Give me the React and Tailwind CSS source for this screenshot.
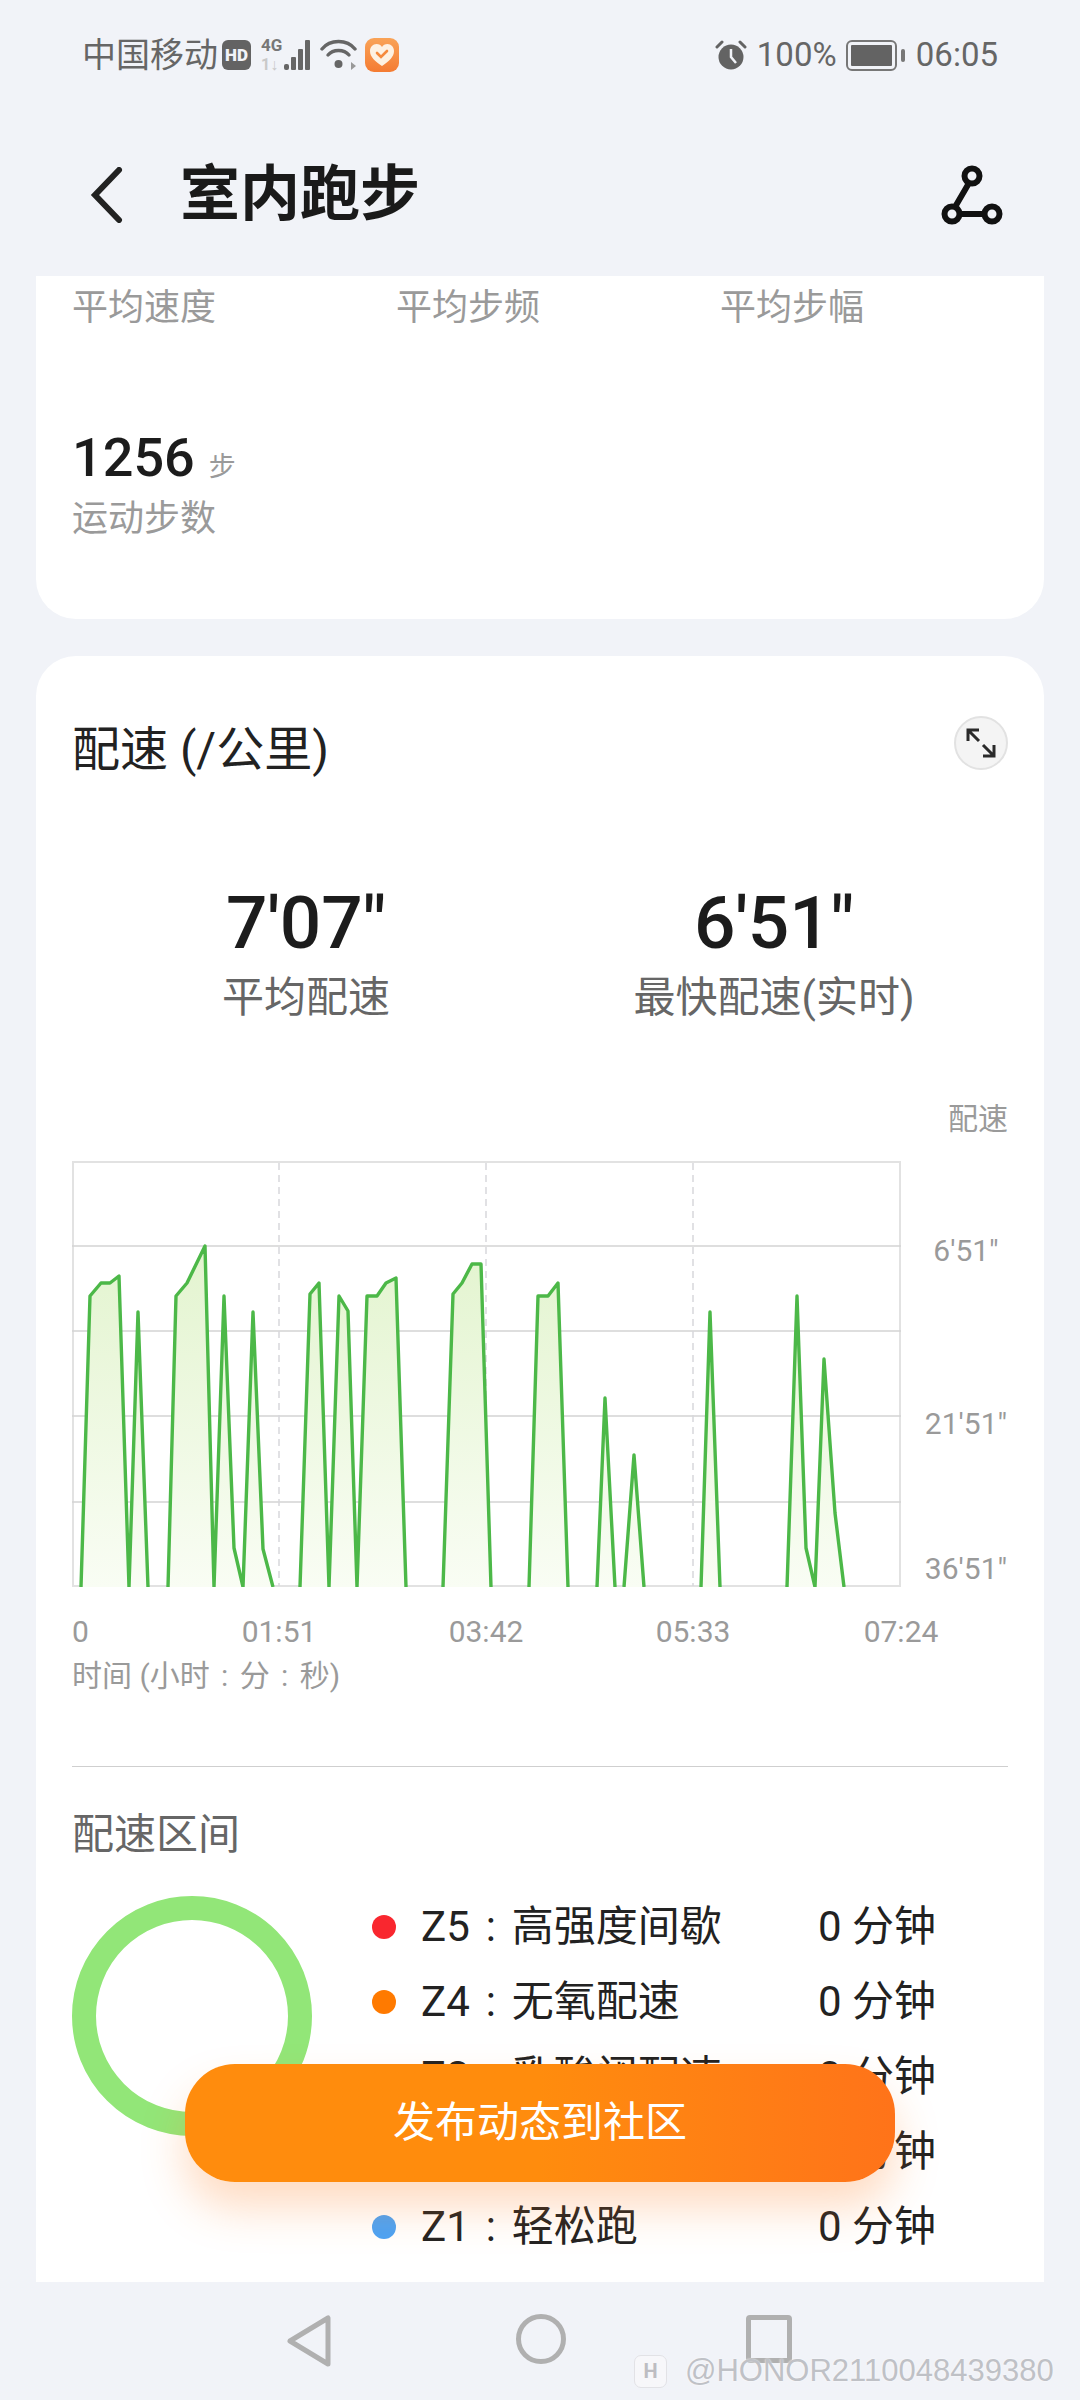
import React from 'react';

const FONT = 'font-[Roboto,"Noto_Sans_CJK_SC",sans-serif]';

// chart runs, px inside the plot; the line breaks where there is no pace
const PACE_RUNS = [
    [[9, 426], [18, 135], [29, 122], [38, 122], [47, 115], [57, 426], [66, 151], [76, 426]],
    [[96, 426], [104, 135], [115, 122], [133, 85], [142, 426], [152, 135], [162, 387], [171, 426],
        [181, 151], [191, 388], [201, 426]],
    [[228, 426], [238, 133], [247, 122], [257, 426], [267, 135], [276, 150], [285, 426],
        [295, 135], [305, 135], [314, 122], [324, 117], [334, 426]],
    [[371, 426], [381, 133], [390, 122], [400, 103], [409, 103], [419, 426]],
    [[457, 426], [466, 135], [476, 135], [486, 122], [496, 426]],
    [[525, 426], [533, 237], [543, 426]],
    [[552, 426], [562, 294], [572, 426]],
    [[629, 426], [638, 151], [648, 426]],
    [[715, 426], [725, 135], [734, 387], [743, 426], [752, 198], [763, 352], [772, 426]],
];

const ZONES = [
    { dot: 'bg-[#f9272f]', zone: 'Z5', name: '高强度间歇' },
    { dot: 'bg-[#ff7a00]', zone: 'Z4', name: '无氧配速' },
    { dot: 'bg-[#fcc419]', zone: 'Z3', name: '乳酸阈配速' },
    { dot: 'bg-[#5fd068]', zone: 'Z2', name: '马拉松配速' },
    { dot: 'bg-[#4ca3f5]', zone: 'Z1', name: '轻松跑' },
];

// small centred colon in a full width cell
const Colon = () => <span className="inline-block w-[1em] text-center">:</span>;

const StatLabel = ({ children, className }) => (
    <span className={`text-[36px] leading-[46px] text-[#9a9a9a] ${className || ''}`}>{children}</span>
);

const StatusLeft = () => (
    <div className="flex items-center">
        <span className="text-[34px] leading-[48px] text-[#666] w-[140px] whitespace-nowrap">中国移动</span>
        <div className="w-[29px] h-[30px] rounded-[6px] bg-[#636363] flex items-center justify-center text-[17px] leading-none font-black text-[#f1f3f8]">
            HD
        </div>
        <svg className="ml-[10px]" width="50" height="36" viewBox="0 0 50 36">
            <text x="0" y="14" fontSize="17" fontWeight="700" fill="#777" fontFamily="Roboto">4G</text>
            <text x="0" y="33" fontSize="16" fontWeight="700" fill="#c9c9c9" fontFamily="Roboto">1↓</text>
            <rect x="23" y="27" width="5" height="6" rx="2" fill="#666" />
            <rect x="30" y="20" width="5" height="13" rx="1" fill="#666" />
            <rect x="37" y="12" width="5" height="21" rx="1" fill="#666" />
            <rect x="44" y="3" width="5" height="30" rx="1" fill="#666" />
        </svg>
        <svg className="ml-[9px]" width="39" height="34" viewBox="0 0 39 34">
            <g fill="none" stroke="#666" strokeWidth="3.4" strokeLinecap="round">
                <path d="M2 11C10 1 27 1 35 11" />
                <path d="M8 17C13 11 24 11 29 17" />
            </g>
            <circle cx="18.5" cy="26" r="4" fill="#666" />
            <path d="M31 24v8l5-4z" fill="#999" />
        </svg>
        <div className="ml-[6px] w-[34px] h-[34px] rounded-[9px] bg-gradient-to-b from-[#f9a357] to-[#f47b32] flex items-center justify-center">
            <svg width="26" height="24" viewBox="0 0 26 24">
                <path d="M13 23C6 18 1 14 1 8c0-4 3-7 6.500-7 2.500 0 4.500 1.200 5.500 3 1-1.800 3-3 5.500-3C22 1 25 4 25 8c0 6-5 10-12 15z" fill="#fdf1e2" />
                <path d="M8 10l4 4 6-6" fill="none" stroke="#f58a3c" strokeWidth="2.600" strokeLinecap="round" />
            </svg>
        </div>
    </div>
);

const StatusRight = () => (
    <div className="flex items-center text-[33px] leading-[48px] text-[#666]">
        <svg width="32" height="30" viewBox="0 0 32 30">
            <circle cx="16" cy="17" r="12.500" fill="#636363" />
            <path d="M16 9v8l5 6" fill="none" stroke="#f1f3f8" strokeWidth="2.500" />
            <path d="M2 7l5-5M30 7l-5-5" stroke="#636363" strokeWidth="3" strokeLinecap="round" />
        </svg>
        <span className="ml-[10px] w-[84px]">100%</span>
        <div className="ml-[5px] w-[51px] h-[31px] rounded-[6px] border-2 border-[#777] p-[3px]">
            <div className="w-full h-full bg-[#636363] rounded-[1px]" />
        </div>
        <div className="ml-[4px] w-[4px] h-[13px] rounded-[2px] bg-[#777]" />
        <span className="ml-[11px]">06:05</span>
    </div>
);

const PaceChart = () => (
    <svg width="829" height="426" viewBox="0 0 829 426" className="block shrink-0">
        <defs>
            <linearGradient id="paceFill" gradientUnits="userSpaceOnUse" x1="0" y1="85" x2="0" y2="426">
                <stop offset="0" stopColor="#e3f4cf" />
                <stop offset="1" stopColor="#f9fdf4" />
            </linearGradient>
        </defs>
        <rect x="1" y="1" width="827" height="424" fill="#fff" stroke="#e2e2e2" strokeWidth="2" />
        {[85, 170, 255, 341].map((y) => (
            <line key={y} x1="0" x2="829" y1={y} y2={y} stroke="#d3d3d3" strokeWidth="1.500" />
        ))}
        {[207, 414, 621].map((x) => (
            <line key={x} x1={x} x2={x} y1="2" y2="425" stroke="#d8d8dc" strokeWidth="1.500" strokeDasharray="7 5" />
        ))}
        {PACE_RUNS.map((run) => {
            const points = run.map((p) => p.join(',')).join(' ');
            return (
                <g key={points}>
                    <polygon points={points} fill="url(#paceFill)" />
                    <polyline points={points} fill="none" stroke="#4cb848" strokeWidth="3.400" strokeLinejoin="round" />
                </g>
            );
        })}
    </svg>
);

const App = () => {
    return (
        <div className={`relative w-[1080px] h-[2400px] overflow-hidden flex flex-col bg-[#f1f3f8] ${FONT}`}>
            <div className="h-[108px] pl-[82px] pr-[82px] pt-[31px] flex items-start justify-between shrink-0">
                <StatusLeft />
                <StatusRight />
            </div>

            <div className="h-[168px] pl-[88px] pr-[76px] pt-[6px] flex items-center shrink-0">
                <svg width="38" height="56" viewBox="0 0 38 56" fill="none">
                    <path d="M31 3L7 28l24 25" stroke="#222" strokeWidth="6" strokeLinecap="round" />
                </svg>
                <h1 className="ml-[54px] text-[60px] leading-[70px] font-bold text-[#1a1a1a]">室内跑步</h1>
                <svg className="ml-auto" width="64" height="60" viewBox="0 0 64 60" fill="none" stroke="#111" strokeWidth="6">
                    <circle cx="32" cy="11" r="7.500" />
                    <circle cx="12" cy="49" r="7.500" />
                    <circle cx="52" cy="49" r="7.500" />
                    <path d="M29 18L15 42M20 49h24" />
                </svg>
            </div>

            <main className="h-[2006px] px-[36px] flex flex-col overflow-hidden shrink-0">
                <section className="h-[343px] shrink-0 bg-white rounded-b-[40px] px-[36px] pt-[9px]">
                    <div className="flex">
                        <StatLabel className="w-[324px]">平均速度</StatLabel>
                        <StatLabel className="w-[324px]">平均步频</StatLabel>
                        <StatLabel>平均步幅</StatLabel>
                    </div>
                    <div className="mt-[95px] flex items-baseline">
                        <span className="text-[54px] leading-[64px] font-medium text-[#1c1c1c]">1256</span>
                        <span className="ml-[14px] text-[27px] text-[#9a9a9a]">步</span>
                    </div>
                    <div className="mt-[6px]">
                        <StatLabel>运动步数</StatLabel>
                    </div>
                </section>

                <section className="relative mt-[37px] flex-1 bg-white rounded-t-[40px] px-[36px] pt-[62px]">
                    <div className="flex items-center justify-between h-[64px]">
                        <h2 className="text-[48px] leading-[64px] text-[#222]">配速 (/公里)</h2>
                        <div className="w-[54px] h-[54px] -mt-[14px] rounded-full border-2 border-[#e2e2e2] bg-[#f4f4f4] flex items-center justify-center">
                            <svg width="34" height="34" viewBox="0 0 34 34" fill="none" stroke="#2a2a2a" strokeWidth="3">
                                <path d="M4 4l11 11M19 19l11 11M4 15V4h11M30 19v11H19" />
                            </svg>
                        </div>
                    </div>

                    <div className="mt-[98px] flex">
                        <div className="w-[468px] flex flex-col items-center">
                            <span className="text-[73px] leading-[86px] font-medium text-[#1c1c1c]">7'07"</span>
                            <span className="mt-[5px] text-[42px] leading-[54px] text-[#666]">平均配速</span>
                        </div>
                        <div className="w-[468px] flex flex-col items-center">
                            <span className="text-[73px] leading-[86px] font-medium text-[#1c1c1c]">6'51"</span>
                            <span className="mt-[5px] text-[42px] leading-[54px] text-[#666]">最快配速(实时)</span>
                        </div>
                    </div>

                    <div className="mt-[74px] text-right text-[30px] leading-[40px] text-[#9a9a9a]">配速</div>

                    <div className="mt-[22px] flex">
                        <PaceChart />
                        <div className="ml-[23px] w-[84px] flex flex-col items-center text-[30px] leading-[36px] text-[#9a9a9a]">
                            <span className="mt-[72px]">6'51"</span>
                            <span className="mt-[137px]">21'51"</span>
                            <span className="mt-[109px]">36'51"</span>
                        </div>
                    </div>

                    <div className="mt-[27px] w-[934px] h-[36px] relative text-[30px] leading-[36px] text-[#9a9a9a]">
                        <span className="absolute left-0">0</span>
                        <span className="absolute left-[207px] -translate-x-1/2">01:51</span>
                        <span className="absolute left-[414px] -translate-x-1/2">03:42</span>
                        <span className="absolute left-[621px] -translate-x-1/2">05:33</span>
                        <span className="absolute left-[829px] -translate-x-1/2">07:24</span>
                    </div>
                    <div className="mt-[8px] text-[30px] leading-[36px] text-[#9a9a9a]">
                        时间 (小时<Colon />分<Colon />秒)
                    </div>

                    <div className="mt-[72px] h-px bg-[#cfcfcf]" />

                    <h3 className="mt-[41px] text-[42px] leading-[54px] text-[#666]">配速区间</h3>

                    <div className="mt-[24px] flex">
                        <div className="w-[240px] h-[240px] mt-[10px] rounded-full border-[24px] border-[#92e678] shrink-0" />
                        <div className="ml-[60px] mt-[3px] w-[574px] flex flex-col">
                            {ZONES.map((z) => (
                                <div key={z.zone} className="h-[75px] flex items-center text-[42px] text-[#222]">
                                    <span className={`w-[24px] h-[24px] rounded-full ${z.dot}`} />
                                    <span className="ml-[25px] w-[397px] whitespace-nowrap">
                                        {z.zone}<Colon />{z.name}
                                    </span>
                                    <span className="whitespace-nowrap">0 分钟</span>
                                </div>
                            ))}
                        </div>
                    </div>
                </section>
            </main>

            <nav className="flex-1 flex items-start pt-[32px] pl-[286px]">
                <svg width="47" height="54" viewBox="0 0 47 54" fill="none" stroke="#b0b0b0" strokeWidth="5" strokeLinejoin="round">
                    <path d="M42 4v46L4 27z" />
                </svg>
                <div className="ml-[183px] w-[50px] h-[50px] rounded-full border-[5px] border-[#b0b0b0]" />
                <div className="ml-[180px] mt-[1px] w-[46px] h-[48px] rounded-[4px] border-[5px] border-[#b0b0b0]" />
            </nav>

            <button className="absolute left-[185px] top-[2064px] w-[710px] h-[118px] rounded-[50px] bg-gradient-to-r from-[#ff8c0d] from-50% to-[#ff7319] shadow-[0_26px_44px_rgba(255,130,40,0.28)] text-[42px] leading-[54px] text-white">
                发布动态到社区
            </button>

            <div className="absolute left-[634px] top-[2353px] flex items-center">
                <div className="w-[33px] h-[33px] rounded-[7px] bg-[#f7f7fa] border border-[#e2e2e6] flex items-center justify-center text-[20px] font-bold text-[#bdbdc2]">
                    H
                </div>
                <span className="ml-[18px] font-['Liberation_Sans',sans-serif] text-[31px] leading-[36px] text-[#bfc1c6] whitespace-nowrap [text-shadow:0_0_2px_#fff]">
                    @HONOR2110048439380
                </span>
            </div>
        </div>
    );
};

export default App;
